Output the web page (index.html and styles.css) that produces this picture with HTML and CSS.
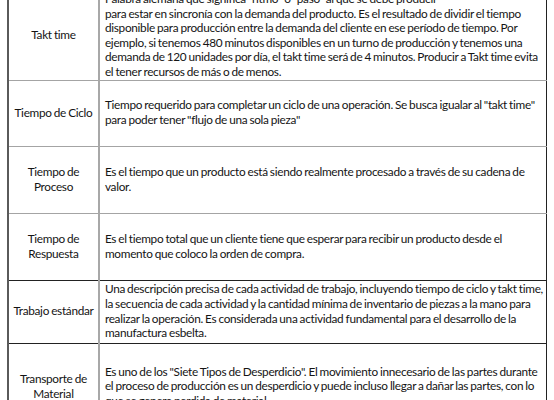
FILE: index.html
```html
<!DOCTYPE html>
<html lang="es">
<head>
    <meta charset="UTF-8">
    <meta name="viewport" content="width=device-width, initial-scale=1.0">
    <title>Glosario de manufactura esbelta</title>
    <link rel="stylesheet" href="styles.css">
</head>
<body>
    <table class="glosario">
        <tr class="fila-takt">
            <td class="termino">Takt time</td>
            <td class="definicion">Palabra alemana que significa "ritmo" o "paso" al que se debe producir<br>para estar en sincronía con la demanda del producto. Es el resultado de dividir el tiempo<br>disponible para producción entre la demanda del cliente en ese período de tiempo. Por<br>ejemplo, si tenemos 480 minutos disponibles en un turno de producción y tenemos una<br>demanda de 120 unidades por día, el takt time será de 4 minutos. Producir a Takt time evita<br>el tener recursos de más o de menos.</td>
        </tr>
        <tr class="fila-ciclo">
            <td class="termino">Tiempo de Ciclo</td>
            <td class="definicion">Tiempo requerido para completar un ciclo de una operación. Se busca igualar al "takt time"<br>para poder tener "flujo de una sola pieza"</td>
        </tr>
        <tr class="fila-proceso">
            <td class="termino">Tiempo de Proceso</td>
            <td class="definicion">Es el tiempo que un producto está siendo realmente procesado a través de su cadena de<br>valor.</td>
        </tr>
        <tr class="fila-respuesta">
            <td class="termino">Tiempo de Respuesta</td>
            <td class="definicion">Es el tiempo total que un cliente tiene que esperar para recibir un producto desde el<br>momento que coloco la orden de compra.</td>
        </tr>
        <tr class="fila-estandar">
            <td class="termino">Trabajo estándar</td>
            <td class="definicion">Una descripción precisa de cada actividad de trabajo, incluyendo tiempo de ciclo y takt time,<br>la secuencia de cada actividad y la cantidad mínima de inventario de piezas a la mano para<br>realizar la operación. Es considerada una actividad fundamental para el desarrollo de la<br>manufactura esbelta.</td>
        </tr>
        <tr class="fila-transporte">
            <td class="termino">Transporte de Material</td>
            <td class="definicion">Es uno de los "Siete Tipos de Desperdicio". El movimiento innecesario de las partes durante<br>el proceso de producción es un desperdicio y puede incluso llegar a dañar las partes, con lo<br>que se genera perdida de material.</td>
        </tr>
    </table>
</body>
</html>
```

FILE: styles.css
```css
body {
    margin: 0;
    background-color: #fff;
    font-family: Lato, "Liberation Sans", sans-serif;
    font-size: 11.8px;
    line-height: 14.6px;
    letter-spacing: -0.3px;
    word-spacing: -0.6px;
    color: #141414;
}
.glosario {
    margin: -8px 0 0 7px;
    width: 540px;
    border-collapse: collapse;
    border-left: 2px solid #5a5a5a;
    border-right: 1px solid #222;
}
.glosario td {
    border-top: 1px solid #a4a4a4;
    vertical-align: middle;
    padding: 0 3px 0 5px;
}
.definicion {
    white-space: nowrap;
}
.glosario .termino {
    width: 85px;
    padding: 0 2px;
    text-align: center;
    border-right: 2px solid #a8a8a8;
}
.fila-takt td {
    height: 84px;
    border-top: none;
}
.fila-ciclo td {
    height: 65px;
}
.fila-proceso td,
.fila-respuesta td {
    height: 66px;
}
.fila-estandar td {
    height: 62px;
    border-top-color: #222;
}
.fila-transporte td {
    height: 86px;
    border-top-color: #222;
}
```
